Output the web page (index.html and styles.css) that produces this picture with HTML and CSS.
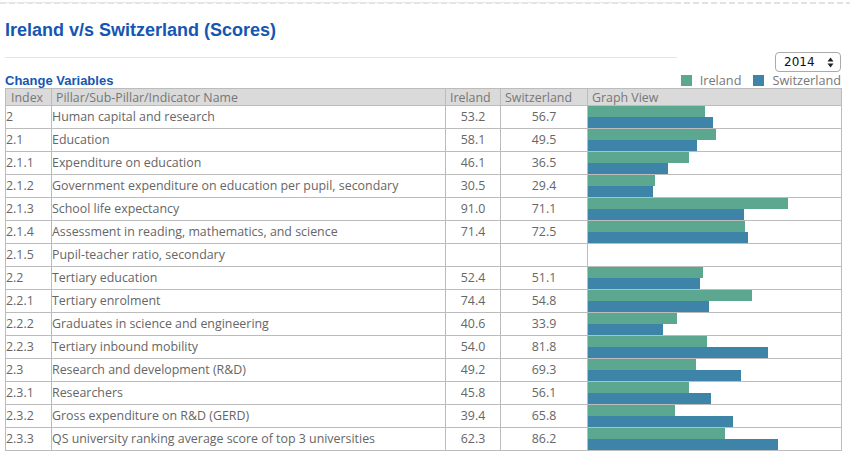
FILE: index.html
```html
<!DOCTYPE html>
<html>
<head>
<meta charset="utf-8">
<link rel="stylesheet" href="styles.css">
</head>
<body>
<div class="topline"><div class="topline-solid"></div></div>
<div class="page">
  <h1 class="title">Ireland v/s Switzerland (Scores)</h1>
  <div class="controls">
    <div class="rule"></div>
    <div class="select">
      <span>2014</span>
      <svg width="7" height="11" viewBox="0 0 7 11"><path d="M3.5 0.5 L6.5 4.5 L0.5 4.5 Z M3.5 10.5 L6.5 6.5 L0.5 6.5 Z" fill="#222"/></svg>
    </div>
    <div class="change">Change Variables</div>
    <div class="legend">
      <span class="swatch green"></span><span class="legend-label">Ireland</span>
      <span class="swatch blue"></span><span class="legend-label">Switzerland</span>
    </div>
  </div>
  <table class="data">
    <colgroup>
      <col class="c-index"><col class="c-name"><col class="c-ie"><col class="c-ch"><col class="c-graph">
    </colgroup>
    <thead>
      <tr><th>Index</th><th>Pillar/Sub-Pillar/Indicator Name</th><th>Ireland</th><th>Switzerland</th><th>Graph View</th></tr>
    </thead>
    <tbody>
      <tr><td>2</td><td>Human capital and research</td><td class="num">53.2</td><td class="num">56.7</td><td class="graph"><div class="bar green" style="width:117px"></div><div class="bar blue" style="width:124.7px"></div></td></tr>
      <tr><td>2.1</td><td>Education</td><td class="num">58.1</td><td class="num">49.5</td><td class="graph"><div class="bar green" style="width:127.8px"></div><div class="bar blue" style="width:108.9px"></div></td></tr>
      <tr><td>2.1.1</td><td>Expenditure on education</td><td class="num">46.1</td><td class="num">36.5</td><td class="graph"><div class="bar green" style="width:101.4px"></div><div class="bar blue" style="width:80.3px"></div></td></tr>
      <tr><td>2.1.2</td><td>Government expenditure on education per pupil, secondary</td><td class="num">30.5</td><td class="num">29.4</td><td class="graph"><div class="bar green" style="width:67.1px"></div><div class="bar blue" style="width:64.7px"></div></td></tr>
      <tr><td>2.1.3</td><td>School life expectancy</td><td class="num">91.0</td><td class="num">71.1</td><td class="graph"><div class="bar green" style="width:200.2px"></div><div class="bar blue" style="width:156.4px"></div></td></tr>
      <tr><td>2.1.4</td><td>Assessment in reading, mathematics, and science</td><td class="num">71.4</td><td class="num">72.5</td><td class="graph"><div class="bar green" style="width:157.1px"></div><div class="bar blue" style="width:159.5px"></div></td></tr>
      <tr><td>2.1.5</td><td>Pupil-teacher ratio, secondary</td><td class="num"></td><td class="num"></td><td class="graph"></td></tr>
      <tr><td>2.2</td><td>Tertiary education</td><td class="num">52.4</td><td class="num">51.1</td><td class="graph"><div class="bar green" style="width:115.3px"></div><div class="bar blue" style="width:112.4px"></div></td></tr>
      <tr><td>2.2.1</td><td>Tertiary enrolment</td><td class="num">74.4</td><td class="num">54.8</td><td class="graph"><div class="bar green" style="width:163.7px"></div><div class="bar blue" style="width:120.6px"></div></td></tr>
      <tr><td>2.2.2</td><td>Graduates in science and engineering</td><td class="num">40.6</td><td class="num">33.9</td><td class="graph"><div class="bar green" style="width:89.3px"></div><div class="bar blue" style="width:74.6px"></div></td></tr>
      <tr><td>2.2.3</td><td>Tertiary inbound mobility</td><td class="num">54.0</td><td class="num">81.8</td><td class="graph"><div class="bar green" style="width:118.8px"></div><div class="bar blue" style="width:180px"></div></td></tr>
      <tr><td>2.3</td><td>Research and development (R&amp;D)</td><td class="num">49.2</td><td class="num">69.3</td><td class="graph"><div class="bar green" style="width:108.2px"></div><div class="bar blue" style="width:152.5px"></div></td></tr>
      <tr><td>2.3.1</td><td>Researchers</td><td class="num">45.8</td><td class="num">56.1</td><td class="graph"><div class="bar green" style="width:100.8px"></div><div class="bar blue" style="width:123.4px"></div></td></tr>
      <tr><td>2.3.2</td><td>Gross expenditure on R&amp;D (GERD)</td><td class="num">39.4</td><td class="num">65.8</td><td class="graph"><div class="bar green" style="width:86.7px"></div><div class="bar blue" style="width:144.8px"></div></td></tr>
      <tr><td>2.3.3</td><td>QS university ranking average score of top 3 universities</td><td class="num">62.3</td><td class="num">86.2</td><td class="graph"><div class="bar green" style="width:137.1px"></div><div class="bar blue" style="width:189.6px"></div></td></tr>
    </tbody>
  </table>
</div>
</body>
</html>
```

FILE: styles.css
```css
* { box-sizing: border-box; }
html, body { margin: 0; padding: 0; background: #fff; }
body { font-family: "Open Sans", "DejaVu Sans", sans-serif; color: #666; }

.topline {
  height: 3px;
  background: repeating-linear-gradient(90deg, #e2e2e2 0 6px, #fff 6px 9px);
  background-size: 100% 2px;
  background-repeat: no-repeat;
}
.topline-solid { width: 677px; height: 1px; margin-top: 2px; background: #e6e6e6; }

.page { padding: 0 9px 0 5px; }

.title {
  margin: 0;
  padding-top: 14px;
  height: 47px;
  font-family: "Liberation Sans", Arial, sans-serif;
  font-weight: bold;
  font-size: 18px;
  line-height: 22px;
  color: #1556b3;
}

.controls {
  display: grid;
  grid-template-columns: 1fr auto;
  grid-template-rows: 20px 16px;
  row-gap: 0;
  align-items: start;
}
.rule { width: 672px; height: 1px; background: #e4e4e4; margin-top: 5px; }
.select {
  justify-self: end;
  width: 66px;
  height: 20px;
  border: 1px solid #aaa;
  border-radius: 4px;
  display: flex;
  align-items: center;
  justify-content: space-between;
  padding: 0 6px 0 8px;
  font-family: "DejaVu Sans", sans-serif;
  font-size: 12px;
  color: #111;
  background: #fff;
}
.change {
  align-self: end;
  font-family: "Liberation Sans", Arial, sans-serif;
  font-weight: bold;
  font-size: 13px;
  line-height: 15px;
  color: #1556b3;
}
.legend {
  display: flex;
  align-items: center;
  font-size: 12.7px;
  line-height: 16px;
  color: #777;
}
.swatch { width: 11px; height: 11px; margin-right: 8px; }
.legend-label { margin-right: 12px; }
.legend-label:last-child { margin-right: 0; }
.green { background: #5ca78f; }
.blue { background: #3e84a8; }

.data {
  width: 836px;
  border-collapse: collapse;
  table-layout: fixed;
  font-size: 12.4px;
}
.c-index { width: 46px; }
.c-name { width: 394px; }
.c-ie { width: 55px; }
.c-ch { width: 87px; }
.c-graph { width: 254px; }

.data th, .data td { border: 1px solid #bcbcbc; }
.data th {
  background: #dadada;
  color: #777;
  font-weight: normal;
  text-align: left;
  height: 17px;
  padding: 0 4px;
  line-height: 15px;
  white-space: nowrap;
}
.data th:first-child { padding-left: 5px; }
.data td {
  height: 23px;
  padding: 0;
  line-height: 16px;
  white-space: nowrap;
}
.data td.num { text-align: center; }
.bar { height: 11px; }
```
